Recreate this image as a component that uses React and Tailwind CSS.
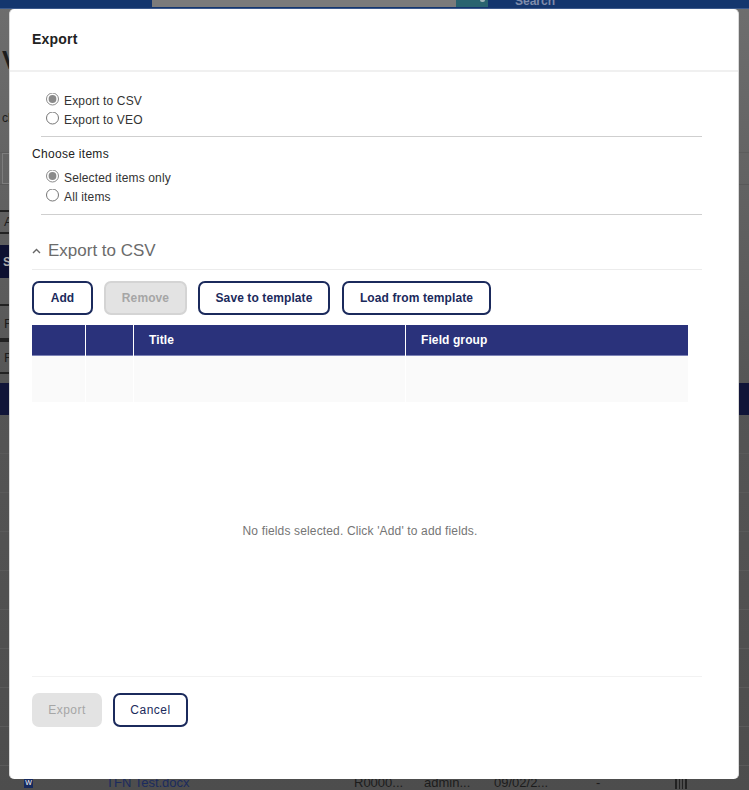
const Radio = ({ name, label, checked }) => (
  <label className="flex items-center h-[19px] text-[12px] tracking-[0.15px] text-[#333]">
    <input type="radio" name={name} defaultChecked={checked} className="w-[13px] h-[13px] m-0 mr-[5px] -translate-y-[1.5px] accent-[#8a8a8a]" />
    {label}
  </label>
)

const Button = ({ label, width, disabled }) => (
  <button
    className={`h-[34px] pb-[1px] rounded-[7px] border-2 text-[12px] font-bold tracking-[0.1px] ${width} ${disabled ? 'border-[#d4d4d4] bg-[#e3e3e3] text-[#a6a6a6]' : 'border-[#1b2a5c] bg-white text-[#1b2a5c]'}`}>
    {label}
  </button>
)

const backdropRow = 'h-[39px] shrink-0 border-b border-[#5a5a5a]'

export default function App() {
  return (
    <div className="relative w-[749px] h-[790px] overflow-hidden bg-[#666] font-['Liberation_Sans',Arial,sans-serif]">
      {/* dimmed page behind the dialog */}
      <div className="flex flex-col h-full bg-gradient-to-b from-[#6e6e6e] via-[#555] to-[#4d4d4d]">
        <div className="h-[9px] shrink-0 bg-[#14366e] border-b border-[#3d5a8c] flex items-end overflow-hidden pl-[152px]">
          <div className="w-[304px] h-[7px] self-start bg-[#7b7b7b]" />
          <div className="w-[32px] h-[7px] self-start bg-[#2a6470] flex justify-end pr-[3px]">
            <span className="w-[5px] h-[2px] rounded-b-full bg-[#9fb4b8]" />
          </div>
          <span className="ml-[27px] text-[12px] leading-[12px] font-bold text-[#7f8cab] -translate-y-[1px]">Search</span>
        </div>
        <div className="h-[144px] shrink-0 pt-[36px] pl-[2px] border-b border-[#5c5c5c] text-[#1c1c1c]">
          <p className="text-[26px] leading-[30px] font-bold">V</p>
          <p className="mt-[36px] text-[12px] leading-[14px]">cl</p>
        </div>
        <div className="h-[32px] shrink-0 border-b border-[#585858] pl-[2px]">
          <div className="w-[8px] h-[31px] border border-[#7d7d7d]" />
        </div>
        <div className="h-[25px] shrink-0" />
        <div className="h-[24px] w-[120px] shrink-0 border-y-2 border-[#222] pl-[4px] flex items-center text-[13px] text-[#1c1c1c]">A</div>
        <div className="h-[11px] shrink-0" />
        <div className="h-[33px] w-[120px] shrink-0 bg-[#0d1030] pl-[3px] flex items-center text-[12px] font-bold text-[#aaa]">S</div>
        <div className="h-[10px] shrink-0 border-b border-[#5c5c5c]" />
        <div className="h-[18px] w-[120px] shrink-0 border-b-2 border-[#222]" />
        <div className="h-[34px] w-[120px] shrink-0 border-b-2 border-[#222] pl-[4px] pt-[3px] flex items-center text-[13px] text-[#1c1c1c]">F</div>
        <div className="h-[34px] w-[120px] shrink-0 border-y-2 border-[#222] pl-[4px] pt-[1px] flex items-center text-[13px] text-[#1c1c1c]">F</div>
        <div className="h-[9px] shrink-0" />
        <div className="h-[32px] shrink-0 bg-[#111538]" />
        {Array.from({ length: 9 }).map((_, i) => (
          <div key={i} className={backdropRow} />
        ))}
        <div className="flex items-center h-[20px] shrink-0 text-[13px] leading-[13px] pt-[13px] text-[#1c1c1c]">
          <span className="ml-[24px] w-[9px] h-[10px] bg-[#172a5e] text-white text-[7px] leading-[10px] text-center">W</span>
          <span className="ml-[73px] w-[248px] text-[#1b2b5e]">TFN Test.docx</span>
          <span className="w-[70px]">R0000...</span>
          <span className="w-[70px]">admin...</span>
          <span className="w-[102px]">09/02/2...</span>
          <span className="w-[79px]">-</span>
          <span className="w-[12px] h-[13px] border-x border-[#222] bg-[repeating-linear-gradient(90deg,#222_0,#222_1px,transparent_1px,transparent_3px)]" />
        </div>
      </div>

      {/* dialog */}
      <div className="absolute left-[9px] top-[9px] w-[730px] h-[770px] flex flex-col rounded-[5px] bg-white border-x border-[#d9d9d9]">
        <div className="h-[63px] shrink-0 border-b-2 border-[#f0f0f0] pl-[22px] flex items-center">
          <h2 className="text-[14px] font-bold tracking-[0.2px] text-[#222]">Export</h2>
        </div>

        <div className="flex flex-col flex-1 pl-[22px]">
          <div className="ml-[14px] mt-[19px]">
            <Radio name="format" label="Export to CSV" checked />
            <Radio name="format" label="Export to VEO" />
          </div>
          <div className="ml-[9px] w-[661px] mt-[7px] border-t border-[#cfcfcf]" />

          <p className="mt-[9px] text-[12px] leading-[16px] tracking-[0.3px] text-[#222]">Choose items</p>
          <div className="ml-[14px] mt-[6px]">
            <Radio name="items" label="Selected items only" checked />
            <Radio name="items" label="All items" />
          </div>
          <div className="ml-[9px] w-[661px] mt-[8px] border-t border-[#cfcfcf]" />

          <div className="w-[670px] h-[55px] flex items-end pb-[8px] border-b border-[#ececec]">
            <svg width="9" height="6" viewBox="0 0 9 6" className="mr-[7px] mb-[7px]" fill="none" stroke="#666" strokeWidth="1.4">
              <path d="M1 5 L4.5 1.5 L8 5" />
            </svg>
            <span className="text-[17px] leading-[20px] text-[#6b6b6b]">Export to CSV</span>
          </div>

          <div className="flex mt-[11px]">
            <Button label="Add" width="w-[61px]" />
            <div className="ml-[11px]"><Button label="Remove" width="w-[83px]" disabled /></div>
            <div className="ml-[11px]"><Button label="Save to template" width="w-[132px]" /></div>
            <div className="ml-[12px]"><Button label="Load from template" width="w-[149px]" /></div>
          </div>

          <div className="mt-[10px] w-[656px] grid grid-cols-[53px_47px_271px_1fr] gap-x-[1px] text-[12px] font-bold tracking-[0.1px] text-white">
            <div className="h-[31px] bg-[#2a327b] border-b border-[#7c82b5]" />
            <div className="h-[31px] bg-[#2a327b] border-b border-[#7c82b5]" />
            <div className="h-[31px] bg-[#2a327b] border-b border-[#7c82b5] pl-[15px] flex items-center">Title</div>
            <div className="h-[31px] bg-[#2a327b] border-b border-[#7c82b5] pl-[15px] flex items-center">Field group</div>
            <div className="h-[46px] bg-[#fafafa]" />
            <div className="h-[46px] bg-[#fafafa]" />
            <div className="h-[46px] bg-[#fafafa]" />
            <div className="h-[46px] bg-[#fafafa]" />
          </div>

          <div className="w-[656px] h-[274px] flex items-center justify-center">
            <p className="text-[12px] tracking-[0.15px] text-[#757575] mt-[-16px]">No fields selected. Click 'Add' to add fields.</p>
          </div>

          <div className="w-[670px] border-t border-[#f2f2f2]" />

          <div className="flex mt-[16px]">
            <button className="h-[34px] w-[70px] rounded-[7px] bg-[#e3e3e3] text-[12px] tracking-[0.5px] text-[#a6a6a6]">Export</button>
            <button className="ml-[11px] h-[34px] w-[75px] rounded-[7px] border-2 border-[#1b2a5c] bg-white text-[12px] tracking-[0.5px] text-[#1b2a5c]">Cancel</button>
          </div>
        </div>
      </div>
    </div>
  )
}
